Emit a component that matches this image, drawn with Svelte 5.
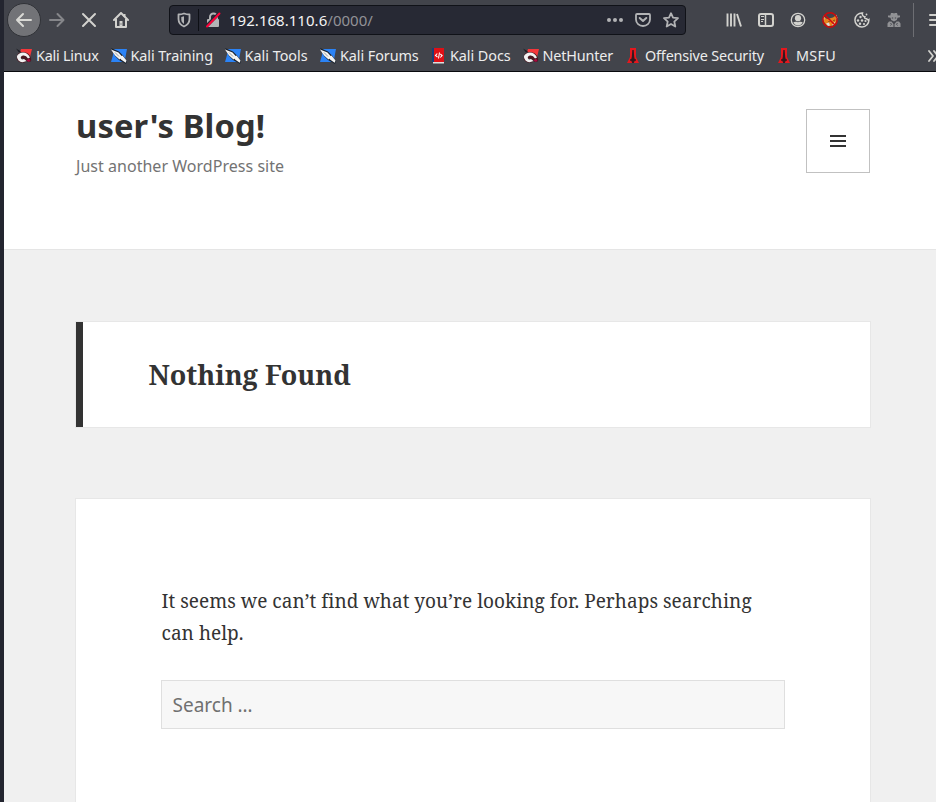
<script>
  const bookmarks = [
    { label: 'Kali Linux', icon: 'dragon', x: 16, spacing: -0.22 },
    { label: 'Kali Training', icon: 'knife', x: 110.5, spacing: -0.06 },
    { label: 'Kali Tools', icon: 'knife', x: 224.5, spacing: 0 },
    { label: 'Kali Forums', icon: 'knife', x: 320, spacing: -0.08 },
    { label: 'Kali Docs', icon: 'book', x: 430, spacing: -0.06 },
    { label: 'NetHunter', icon: 'dragon', x: 522.5, spacing: -0.15 },
    { label: 'Offensive Security', icon: 'tower', x: 625, spacing: -0.17 },
    { label: 'MSFU', icon: 'tower', x: 776, spacing: 0.3 }
  ];
</script>

<div class="window">
  <div class="edge"></div>
  <div class="main">
    <header class="chrome">
      <div class="toolbar">
        <button class="back" aria-label="Back"><svg width="18" height="16" viewBox="0 0 18 16"><path d="M16 8H2M8 2L2 8l6 6" fill="none" stroke="#d9d9d5" stroke-width="2" stroke-linecap="round" stroke-linejoin="round"/></svg></button>
        <svg class="forward" width="18" height="16" viewBox="0 0 18 16"><path d="M2 8h13M9.500 2l6 6-6 6" fill="none" stroke="#85868a" stroke-width="2" stroke-linecap="round" stroke-linejoin="round"/></svg>
        <svg class="stop" width="16" height="16" viewBox="0 0 16 16"><path d="M2 2l12 12M14 2L2 14" stroke="#d2d2ce" stroke-width="2" stroke-linecap="round"/></svg>
        <svg class="home" width="16" height="16" viewBox="0 0 16 16"><path d="M1 8l7-7 7 7" fill="none" stroke="#d2d2ce" stroke-width="2" stroke-linecap="round" stroke-linejoin="round"/><path d="M3 7v8h10V7M11.500 2v3" fill="none" stroke="#d2d2ce" stroke-width="2" stroke-linejoin="round"/><path d="M6.500 9h3v5h-3z" fill="#d2d2ce"/><path d="M8 11.500v1" stroke="#42444b" stroke-width="1"/></svg>
        <div class="urlbar">
          <svg class="shield" width="14" height="16" viewBox="0 0 14 16"><path d="M7 1.500q2.500 1 5.500 1v4.500c0 3.500-2 6-5.500 7.500-3.500-1.500-5.500-4-5.500-7.500V2.500q3 0 5.500-1z" fill="none" stroke="#b2b3b5" stroke-width="1.800" stroke-linejoin="round"/><path d="M7 4.300l-2.700.6v2.700C4.300 9.600 5.200 11 7 12z" fill="#b2b3b5"/></svg>
          <i class="divider"></i>
          <svg class="lock" width="16" height="16" viewBox="0 0 16 16"><path d="M5 8V5a3.500 3.500 0 0 1 7 0v3" fill="none" stroke="#b2b3b5" stroke-width="2"/><rect x="2" y="7" width="12" height="8" rx="1" fill="#b2b3b5"/><path d="M2 13.500L14 1.500" stroke="#272934" stroke-width="3.200"/><path d="M2 14.500l12.500-13" stroke="#ff0039" stroke-width="2" stroke-linecap="round"/></svg>
          <span class="url">192.168.110.6<em>/0000/</em></span>
          <svg class="dots" width="16" height="16" viewBox="0 0 16 16" fill="#b2b3b5"><circle cx="2" cy="8" r="2"/><circle cx="8" cy="8" r="2"/><circle cx="14" cy="8" r="2"/></svg>
          <svg class="pocket" width="16" height="16" viewBox="0 0 16 16"><path d="M2 2h12q1 0 1 1v4.500a7 6.500 0 0 1-14 0V3q0-1 1-1z" fill="none" stroke="#b2b3b5" stroke-width="1.800"/><path d="M4.700 6L8 9l3.300-3" fill="none" stroke="#b2b3b5" stroke-width="2" stroke-linecap="round" stroke-linejoin="round"/></svg>
          <svg class="star" width="16" height="16" viewBox="0 0 16 16"><path d="M8 1.200l2 4.500 5 .5-3.700 3.400 1 4.900L8 12l-4.300 2.500 1-4.900L1 6.200l5-.5z" fill="none" stroke="#b2b3b5" stroke-width="1.800" stroke-linejoin="round"/></svg>
        </div>
        <div class="tools">
          <svg width="16" height="16" viewBox="0 0 16 16"><path d="M1.500 1.500v13M5 1.500v13M8.500 1.500v13M11 2l4 12.500" stroke="#d2d2ce" stroke-width="1.900" fill="none"/></svg>
          <svg width="16" height="16" viewBox="0 0 16 16"><rect x="1" y="2" width="14" height="12" rx="2" fill="none" stroke="#d2d2ce" stroke-width="2"/><path d="M7.500 2v12" stroke="#d2d2ce" stroke-width="1.500"/><path d="M3 4.500h3M3 7.500h3M3 9.500h2" stroke="#d2d2ce"/></svg>
          <svg width="16" height="16" viewBox="0 0 16 16"><circle cx="8" cy="8" r="6.700" fill="none" stroke="#d2d2ce" stroke-width="1.300"/><circle cx="8" cy="6.200" r="3.100" fill="#d2d2ce"/><path d="M3.300 10.300q1.500-1 3-.5 1.700.8 3.400 0 1.500-.5 3 .5Q11 13.500 8 13.500t-4.700-3.200z" fill="#d2d2ce"/></svg>
          <svg width="16" height="16" viewBox="0 0 16 16"><path d="M1.500 7V4.500L5 7l4-1 2-.5L14.500 3v6l-1.500 3-4 2-4-.5L2 10z" fill="#e8831d"/><path d="M1 3.500l1.500 2L2 9zM4 11.500l3-1 1 3-2 .5zM11 11.500l2.500-2-1.500 3.500-2 .5zM14 2.500l1.500 3-1 2z" fill="#dcdcd8"/><path d="M6 10l1-1 1 1zM11 8.500l1.700-1-.3 2z" fill="#5b3420"/><circle cx="8" cy="8" r="7.200" fill="none" stroke="#d1080a" stroke-width="1.400"/><path d="M3 3l10 10" stroke="#d1080a" stroke-width="1.500"/></svg>
          <svg width="16" height="16" viewBox="0 0 16 16"><path d="M8.500 1a7 7 0 1 0 6.400 6.500c-1 .7-2 .2-2.200-.8-1.600.2-2.400-.8-1.900-2C9.200 4.800 7.800 2.800 8.500 1z" fill="none" stroke="#d2d2ce" stroke-width="1.500"/><g fill="#d2d2ce"><circle cx="6.500" cy="5" r="1.200"/><circle cx="4" cy="8.500" r="1.200"/><circle cx="8" cy="8.500" r="1.200"/><circle cx="6" cy="11.800" r="1.200"/><circle cx="10" cy="12" r="1.100"/><circle cx="11.500" cy="9" r="1.100"/><circle cx="12.500" cy="2.500" r=".9"/></g></svg>
          <svg width="16" height="16" viewBox="0 0 16 16" fill="#919295"><path d="M5 1h2l1 .6L9 1h2l.7 2.600H14v1.700l-2.500.5-.7 2.200L8 9.500 5.200 8l-.7-2.200L2 5.300V3.600h2.300z"/><path d="M5.800 6h1.400M8.800 6h1.400" stroke="#42444b"/><path d="M3 9.500h2.500L7.500 12v3h-6v-3.500zM13 9.500h-2.500L8.500 12v3h6v-3.500z"/><path d="M4.500 11l1 1.300-1 1.200M11.500 11l-1 1.300 1 1.200" stroke="#42444b" stroke-width=".9" fill="none"/></svg>
        </div>
        <i class="separator"></i>
        <svg class="menu" width="16" height="16" viewBox="0 0 16 16"><path d="M2 3h13M2 8h13M2 13h13" stroke="#d2d2ce" stroke-width="2" stroke-linecap="round"/></svg>
      </div>
      <nav class="bookmarks">
        {#each bookmarks as b, i}
          <a href="#bookmark" style="width: {(bookmarks[i + 1]?.x ?? 927) - b.x}px">
            <svg class="favicon" width="16" height="16" viewBox="0 0 16 16">
              {#if b.icon === 'dragon'}
                <path d="M5 1h11l-2 8-4-4-6-1z" fill="#f5363a"/><path d="M0 .5l5 3-2 1z" fill="#1c1c22"/><path d="M1 8q1-4 6-4 6 0 8 6 1 4-2 4-2 0-4-2-3-3-4-1 0 2 3 1l2 2q-5 2-8-1-2-2-1-5z" fill="#4a1720"/><path d="M1 8q2-3.500 6-3.500 4.500 0 7 5l-2 1Q10 7 7 7.500q-3 1-2 3 1 1.500 3 .5l2.500 2q-5 2.500-8-.5Q.5 10.500 1 8z" fill="#f2f2f2"/><path d="M10.500 12.500l2.500-2 1.500 2-1.500 1.500z" fill="#a80a40"/>
              {:else if b.icon === 'knife'}
                <path d="M3 1h13l-2.500 13H0l2-7z" fill="#2b83f6"/><path d="M0 0l8 3.500 4 4 4 5.500-1 3-7-4-4-4z" fill="#1c242f"/><path d="M0 1.500l7.500 3L11.500 9 8.500 11.500 4 7.500zM9 9l2.500-1.500 4 5-.8 2.200-4.700-3.200z" fill="#f4f4f3"/><path d="M4 4.500l4 4" stroke="#7d858b" stroke-width=".8"/>
              {:else if b.icon === 'book'}
                <path d="M2 0h12v14H2z" fill="#df1016"/><path d="M2 0h2v14H2z" fill="#193e79"/><path d="M3 14h11v1.500H3z" fill="#dedede"/><path d="M7.300 5.500L5.500 7.500l2 1.500M9.500 4.500L8.500 10.500M10.300 6l1.800 1.500-1.800 2" fill="none" stroke="#fff" stroke-width="1.100"/>
              {:else}
                <path d="M5 0h6v9l3 6H2l3-6z" fill="#e5171d"/><path d="M7.300 2h1.400l.5 7 .8 3-1.200 3H7.200L6 12l.8-3z" fill="#32191e"/><path d="M5 12h6" stroke="#32191e" stroke-width="1.500"/>
              {/if}
            </svg>
            <span class="label" style="letter-spacing: {b.spacing}px">{b.label}</span>
          </a>
        {/each}
        <svg class="more" width="11" height="16" viewBox="0 0 11 16"><path d="M2 3l4 5-4 5M7 3l4 5-4 5" fill="none" stroke="#d2d2ce" stroke-width="1.800" stroke-linecap="round" stroke-linejoin="round"/></svg>
      </nav>
    </header>

    <div class="masthead">
      <div>
        <h1>user's Blog!</h1>
        <p class="tagline">Just another WordPress site</p>
      </div>
      <button class="toggle" aria-label="Menu"><svg width="16" height="12"><path d="M0 1h16M0 6h16M0 11h16" stroke="#333" stroke-width="2"/></svg></button>
    </div>
    <main>
      <section class="page-header"><h2>Nothing Found</h2></section>
      <section class="content">
        <p>It seems we can’t find what you’re looking for. Perhaps searching<br>can help.</p>
        <input type="search" aria-label="Search" placeholder="Search …">
      </section>
    </main>
  </div>
</div>

<style>
  :global(body) { overflow: hidden; }
  * { box-sizing: border-box; }
  svg { display: block; flex: none; }
  button { padding: 0; border-radius: 0; }
  .window { display: flex; width: 936px; height: 802px; overflow: hidden; font-family: "Noto Sans", sans-serif; background: #f0f0f0; }
  .edge { width: 4px; flex: none; background: #23252f; }
  .main { width: 932px; flex: none; }
  .chrome { height: 72px; background: #42444b; border-bottom: 1px solid #08090d; overflow: hidden; }
  .toolbar { display: flex; align-items: center; height: 40px; }
  .back { display: grid; place-items: center; width: 34px; height: 34px; margin: 0 -1px 0 3px; flex: none; border: 1px solid #303237; border-radius: 50%; background: #727377; }
  .forward { margin-left: 8px; }
  .stop { margin-left: 15px; }
  .home { margin-left: 16px; }
  .urlbar { display: flex; align-items: center; width: 517px; height: 30px; margin-left: 40px; flex: none; background: #272934; border: 1px solid #101218; border-radius: 4px; }
  .shield { margin-left: 7px; }
  .divider { width: 1px; height: 22px; margin-left: 7px; background: #0d0f15; }
  .lock { margin-left: 6px; }
  .url { width: 370px; margin-left: 8px; font-size: 15px; letter-spacing: .03px; color: #f3f3f3; white-space: nowrap; line-height: 22px; }
  .url em { font-style: normal; color: #929297; }
  .dots { margin-left: 8px; }
  .pocket, .star { margin-left: 12px; }
  .tools { display: flex; align-items: center; justify-content: space-between; width: 176px; margin-left: 40px; flex: none; }
  .separator { width: 1px; height: 34px; margin-left: 11px; background: #6d6e73; flex: none; }
  .menu { margin-left: 14px; }
  .bookmarks { display: flex; align-items: center; height: 31px; padding-left: 12px; }
  .bookmarks a { display: flex; align-items: center; gap: 4px; flex: none; text-decoration: none; }
  .label { font-size: 14.400px; line-height: 22px; color: #ededed; white-space: nowrap; }
  .masthead { display: flex; justify-content: space-between; height: 178px; padding: 37px 66px 0 72px; background: #fff; border-bottom: 1px solid #e5e5e5; }
  h1 { margin: -5px 0 0; font-size: 32.700px; line-height: 44px; letter-spacing: .14px; color: #333; }
  .tagline { margin: 6px 0 0; font-size: 16px; letter-spacing: .03px; line-height: 24px; color: #737373; }
  .toggle { display: grid; place-items: center; width: 64px; height: 64px; border: 1px solid #c1c1c1; background: #fff; }
  main { padding: 72px 66px 0 72px; }
  .page-header { height: 105px; padding: 33px 65.500px; background: #fff; box-shadow: 0 0 0 1px #e7e7e7; border-left: 7px solid #333; }
  h2 { margin: 0; font: bold 27px/40px "Noto Serif", "DejaVu Serif", serif; color: #333; }
  .content { height: 320px; margin: 72px 0 0; padding: 86px 85px 0; background: #fff; box-shadow: 0 0 0 1px #e7e7e7; }
  .content p { margin: 0; padding-left: .500px; font: 19px/32px "Noto Serif", "DejaVu Serif", serif; letter-spacing: .035px; color: #333; white-space: nowrap; }
  input { display: block; width: 624px; height: 49px; margin: 31px 0 0; padding: 0 10.500px; border: 1px solid #dfdfdf; border-radius: 0; background: #f7f7f7; font: 19px "Noto Sans", sans-serif; appearance: none; }
  input::placeholder { color: #707070; opacity: 1; }
</style>
